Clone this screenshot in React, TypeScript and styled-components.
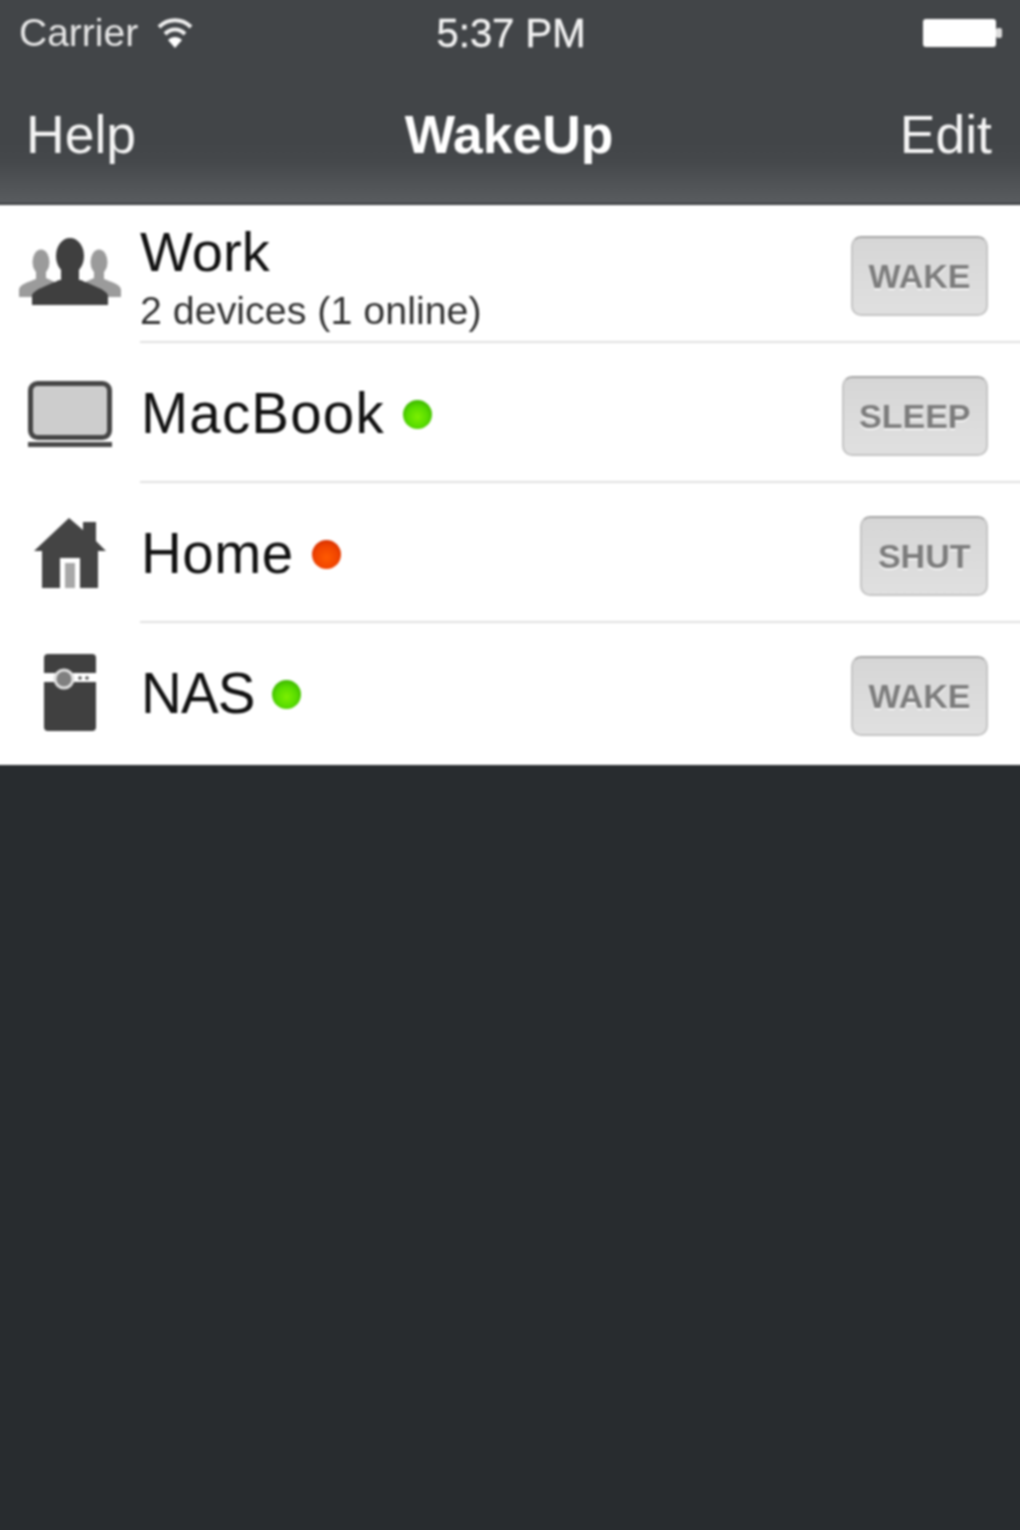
import React from "react";
import styled, { createGlobalStyle } from "styled-components";

const Global = createGlobalStyle`
  html, body { margin: 0; padding: 0; background: #282c2f; }
  body { font-family: "Liberation Sans", Arial, sans-serif; }
`;

const Screen = styled.div`
  width: 1020px;
  height: 1530px;
  overflow: hidden;
  background: #282c2f;
`;

/* Oversized by the bleed on every side, so the soft focus of the picture does not fade at the window edge. */
const Stage = styled.div`
  width: 1032px;
  height: 1542px;
  margin: -6px;
  background: #282c2f;
  display: flex;
  flex-direction: column;
  filter: blur(1px);
`;

const Header = styled.header`
  height: 211px;
  flex: none;
  box-sizing: border-box;
  padding: 6px 6px 0;
  border-bottom: 2px solid #3a3c3f;
  background: linear-gradient(180deg, #424548 0%, #424548 70%, #45484b 80%, #585b5e 99%);
  display: flex;
  flex-direction: column;
`;

const StatusBar = styled.div`
  height: 66px;
  display: grid;
  grid-template-columns: 1fr auto 1fr;
  align-items: center;
  padding: 0 17px 0 19px;
  color: #e6e6e6;
  font-size: 39px;
`;

const Carrier = styled.div`
  display: flex;
  align-items: center;
  gap: 18px;
`;

const Clock = styled.div`
  font-size: 40px;
  font-weight: 500;
  color: #f2f2f2;
  -webkit-text-stroke: 0.4px #f2f2f2;
`;

const Battery = styled.div`
  justify-self: end;
  display: flex;
  align-items: center;
`;

const NavBar = styled.nav`
  flex: 1;
  display: grid;
  grid-template-columns: 1fr auto 1fr;
  align-items: center;
  padding: 0 28px 1px 26px;
  color: #f4f4f4;
  font-size: 53.5px;
`;

const NavTitle = styled.div`
  font-weight: 700;
  font-size: 53.4px;
  color: #fff;
`;

const NavRight = styled.div`
  justify-self: end;
`;

const List = styled.ul`
  list-style: none;
  margin: 0;
  padding: 0;
  background: #fff;
`;

const Row = styled.li`
  height: 140px;
  display: flex;
  padding-left: 6px;
`;

const IconSlot = styled.div<{ $shift?: number }>`
  width: 140px;
  flex: none;
  display: flex;
  align-items: center;
  justify-content: center;
  padding-bottom: ${(p) => p.$shift ?? 0}px;
  box-sizing: border-box;
`;

const Content = styled.div<{ $last?: boolean }>`
  flex: 1;
  display: flex;
  align-items: center;
  justify-content: space-between;
  margin-bottom: 2px;
  padding: 0 38px 0 1px;
  box-sizing: border-box;
  border-bottom: 2px solid ${(p) => (p.$last ? "transparent" : "#e0e0e0")};
`;

const Labels = styled.div`
  display: flex;
  flex-direction: column;
  padding: 6px 0 0 1px;
`;

const NameLine = styled.div<{ $tracking: number }>`
  display: flex;
  align-items: center;
  gap: 18px;
  padding-top: 2px;
  font-size: 56.5px;
  letter-spacing: ${(p) => p.$tracking}px;
  line-height: 64px;
  color: #111;
`;

const GroupName = styled.div`
  font-size: 56px;
  line-height: 60px;
  color: #111;
  margin: -6px 0 0 -2px;
`;

const Subtitle = styled.div`
  font-size: 39.4px;
  line-height: 44px;
  color: #333;
  margin: 6px 0 -8px -2px;
`;

const Dot = styled.span<{ $on: boolean }>`
  width: 29px;
  height: 29px;
  border-radius: 50%;
  background: ${(p) =>
    p.$on
      ? "radial-gradient(circle at 50% 58%, #7cf000 0%, #58dc00 45%, #3bb500 78%, #a8dca0 100%)"
      : "radial-gradient(circle at 50% 60%, #ff5a00 0%, #f04400 50%, #d63000 78%, #eeb0a0 100%)"};
`;

const ActionButton = styled.button`
  height: 80px;
  margin-top: 6px;
  box-sizing: border-box;
  padding: 0 15.5px;
  border: 2px solid #c4c4c4;
  border-top-color: #a6a6a6;
  border-radius: 10px;
  background: linear-gradient(180deg, #d6d6d6 0%, #e0e0e0 100%);
  font-family: inherit;
  font-weight: 700;
  font-size: 34px;
  color: #7c7c7c;
  text-shadow: 0 2px 0 rgba(255, 255, 255, 0.7);
`;

const Wifi = () => (
  <svg width="38" height="34" viewBox="0 0 38 34">
    <path d="M3 11 C12 2 26 2 35 11" fill="none" stroke="#eee" strokeWidth="4" />
    <path d="M9 18 C15 12 23 12 29 18" fill="none" stroke="#eee" strokeWidth="4" />
    <path d="M19 32 L12 24 C16 20 22 20 26 24 Z" fill="#fff" />
  </svg>
);

const BatteryIcon = () => (
  <svg width="80" height="32" viewBox="0 0 80 32">
    <rect x="0" y="2" width="73" height="28" rx="3" fill="#fff" />
    <rect x="73" y="11" width="6" height="10" rx="2" fill="#ddd" />
  </svg>
);

const GroupIcon = () => (
  <svg width="104" height="70" viewBox="0 0 104 70">
    <g fill="#9b9b9b">
      <ellipse cx="23" cy="24" rx="8.5" ry="12.5" />
      <path d="M18 34 H28 V40 L41 46 L17 59 H1 V52 C1 46 11 44 18 41 Z" />
      <ellipse cx="81" cy="24" rx="8.5" ry="12.5" />
      <path d="M76 34 H86 V41 C93 44 103 46 103 52 V59 H87 L63 46 L76 40 Z" />
    </g>
    <ellipse cx="52" cy="18" rx="14" ry="18" fill="#3f3f3f" />
    <path d="M43 28 H61 L61 42 H43 Z" fill="#3f3f3f" />
    <path d="M14 67 V58 C14 52 31 47 41 42 H63 C73 47 90 52 90 58 V67 Z" fill="#3f3f3f" />
  </svg>
);

const LaptopIcon = () => (
  <svg width="84" height="68" viewBox="0 0 84 68">
    <rect x="2.5" y="2.5" width="79" height="54" rx="7" fill="#cdcdcd" stroke="#454545" strokeWidth="5" />
    <rect x="0" y="61" width="84" height="5" fill="#4a4a4a" />
  </svg>
);

const HomeIcon = () => (
  <svg width="72" height="72" viewBox="0 0 72 72">
    <path d="M35 1 L49 13 V5 H62 V24 L72 34 H64 V71 H46 V41 H26 V71 H8 V34 H0 Z" fill="#444" />
    <rect x="31" y="46" width="10" height="25" fill="#a8a8a8" />
  </svg>
);

const NasIcon = () => (
  <svg width="52" height="78" viewBox="0 0 52 78">
    <path d="M4 0 H48 Q52 0 52 4 V19 H0 V4 Q0 0 4 0 Z" fill="#404040" />
    <path d="M0 28 H52 V73 Q52 77 48 77 H4 Q0 77 0 73 Z" fill="#404040" />
    <circle cx="20" cy="25" r="9" fill="#808080" stroke="#e0e0e0" strokeWidth="3" />
    <circle cx="36" cy="24" r="1.8" fill="#555" />
    <circle cx="43" cy="24" r="1.8" fill="#555" />
  </svg>
);

const devices = [
  { name: "MacBook", on: true, action: "SLEEP", icon: <LaptopIcon />, shift: 0, tracking: 1.2 },
  { name: "Home", on: false, action: "SHUT", icon: <HomeIcon />, shift: 4, tracking: 0.5 },
  { name: "NAS", on: true, action: "WAKE", icon: <NasIcon />, shift: 4, tracking: -0.9 },
];

export default function App() {
  return (
    <Screen>
      <Global />
      <Stage>
        <Header>
          <StatusBar>
            <Carrier>
              Carrier
              <Wifi />
            </Carrier>
            <Clock>5:37 PM</Clock>
            <Battery>
              <BatteryIcon />
            </Battery>
          </StatusBar>
          <NavBar>
            <div>Help</div>
            <NavTitle>WakeUp</NavTitle>
            <NavRight>Edit</NavRight>
          </NavBar>
        </Header>
        <List>
          <Row>
            <IconSlot $shift={4}>
              <GroupIcon />
            </IconSlot>
            <Content>
              <Labels>
                <GroupName>Work</GroupName>
                <Subtitle>2 devices (1 online)</Subtitle>
              </Labels>
              <ActionButton>WAKE</ActionButton>
            </Content>
          </Row>
          {devices.map((d, i) => (
            <Row key={d.name}>
              <IconSlot $shift={d.shift}>{d.icon}</IconSlot>
              <Content $last={i === devices.length - 1}>
                <NameLine $tracking={d.tracking}>
                  {d.name}
                  <Dot $on={d.on} />
                </NameLine>
                <ActionButton>{d.action}</ActionButton>
              </Content>
            </Row>
          ))}
        </List>
      </Stage>
    </Screen>
  );
}
